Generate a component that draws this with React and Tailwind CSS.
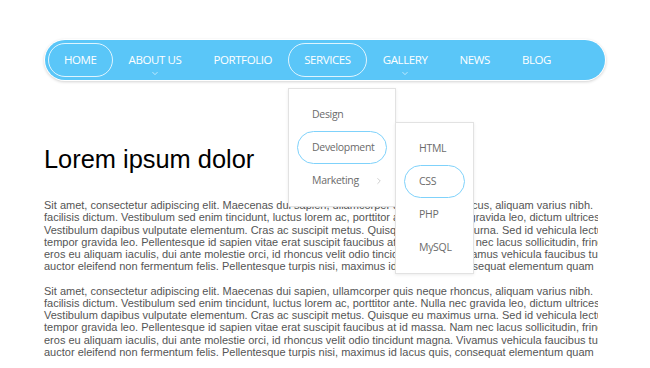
import { ChevronDown, ChevronRight } from 'lucide-react';

const navItems = [
  { label: 'HOME', active: true },
  { label: 'ABOUT US', caret: true },
  { label: 'PORTFOLIO' },
  { label: 'SERVICES', active: true },
  { label: 'GALLERY', caret: true },
  { label: 'NEWS' },
  { label: 'BLOG' },
];

const servicesMenu = [
  { label: 'Design' },
  { label: 'Development', active: true },
  { label: 'Marketing', sub: true },
];

const marketingMenu = [
  { label: 'HTML' },
  { label: 'CSS', active: true },
  { label: 'PHP' },
  { label: 'MySQL' },
];

const paragraph = [
  'Sit amet, consectetur adipiscing elit. Maecenas dui sapien, ullamcorper quis neque rhoncus, aliquam varius nibh.',
  'facilisis dictum. Vestibulum sed enim tincidunt, luctus lorem ac, porttitor ante. Nulla nec gravida leo, dictum ultrices',
  'Vestibulum dapibus vulputate elementum. Cras ac suscipit metus. Quisque eu maximus urna. Sed id vehicula lectus',
  'tempor gravida leo. Pellentesque id sapien vitae erat suscipit faucibus at id massa. Nam nec lacus sollicitudin, fringilla',
  'eros eu aliquam iaculis, dui ante molestie orci, id rhoncus velit odio tincidunt magna. Vivamus vehicula faucibus turpis',
  'auctor eleifend non fermentum felis. Pellentesque turpis nisi, maximus id lacus quis, consequat elementum quam',
];

function MenuItem({ item }) {
  return (
    <div
      className={`flex h-[33px] items-center rounded-full border-[1.5px] pl-[14px] ${
        item.active ? 'border-[#7fd2fb]' : 'border-transparent'
      } ${item.sub ? 'pr-[2px]' : 'pr-[14px]'}`}
    >
      <span>{item.label}</span>
      {item.sub && (
        <ChevronRight size={10} strokeWidth={1.5} className="ml-auto text-[#b0b0b0]" />
      )}
    </div>
  );
}

function Dropdown({ items, className }) {
  return (
    <div
      className={`absolute flex flex-col border border-[#e2e2e2] bg-white px-[8px] py-[9px] text-[10.5px] tracking-[-0.3px] text-[#6b6b6b] shadow-[0_1px_3px_rgba(0,0,0,0.08)] ${className}`}
    >
      {items.map((item) => (
        <MenuItem key={item.label} item={item} />
      ))}
    </div>
  );
}

export default function App() {
  return (
    <div className="relative h-[368px] w-[650px] overflow-hidden bg-white">
      <div className="px-[45px] pt-[40px]" style={{ fontFamily: '"Open Sans", sans-serif' }}>
        <nav className="flex h-[40px] items-center rounded-full bg-[#5ac6f8] px-[3px] shadow-[0_0_0_1px_#fff,0_1px_3px_1px_rgba(0,0,0,0.18)]">
          {navItems.map((item) => (
            <div
              key={item.label}
              className={`relative flex h-[34px] items-center rounded-full border-[1.5px] px-[15px] text-[11.5px] tracking-[-0.4px] text-white ${
                item.active ? 'border-white/80' : 'border-transparent'
              }`}
            >
              {item.label}
              {item.caret && (
                <ChevronDown
                  size={9}
                  strokeWidth={2}
                  className="absolute bottom-[-2px] left-1/2 -translate-x-1/2 text-white/80"
                />
              )}
            </div>
          ))}
        </nav>
      </div>

      <div style={{ fontFamily: '"Open Sans", sans-serif' }}>
        <Dropdown items={servicesMenu} className="left-[288px] top-[88px] w-[108px]" />
        <Dropdown items={marketingMenu} className="left-[395px] top-[122px] w-[79px]" />
      </div>

      <main
        className="w-[598px] overflow-hidden pl-[44px] pt-[65px] text-[#555]"
        style={{ fontFamily: '"Liberation Sans", Arial, sans-serif' }}
      >
        <h1 className="text-[25.4px] leading-[28px] text-black">Lorem ipsum dolor</h1>
        <div className="mt-[26px] text-[11px] leading-[12.25px]">
          {[0, 1].map((p) => (
            <div key={p} className={p ? 'mt-[12px]' : ''}>
              {paragraph.map((line) => (
                <div key={line} className="whitespace-nowrap">
                  {line}
                </div>
              ))}
            </div>
          ))}
        </div>
      </main>
    </div>
  );
}
